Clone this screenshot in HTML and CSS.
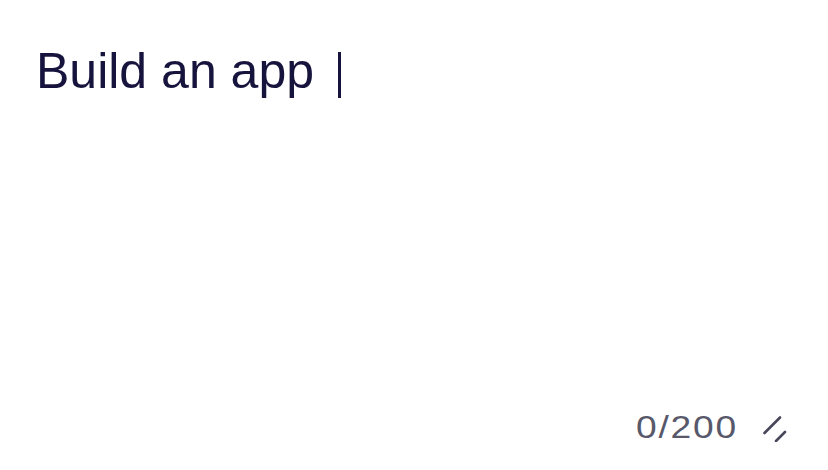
FILE: index.html
```html
<!DOCTYPE html>
<html lang="en">
<head>
<meta charset="utf-8">
<title>Prompt</title>
<link rel="stylesheet" href="styles.css">
</head>
<body>
<div class="editor">
  <div class="prompt"><span class="prompt-text">Build an app</span><span class="caret"></span></div>
  <div class="footer">
    <span class="counter">0/200</span>
    <svg class="resize" width="24" height="28" viewBox="0 0 24 28" aria-hidden="true">
      <line x1="1.5" y1="19" x2="17" y2="3.5" />
      <line x1="13" y1="27" x2="22" y2="18" />
    </svg>
  </div>
</div>
</body>
</html>
```

FILE: styles.css
```css
html, body {
  margin: 0;
  padding: 0;
  background: #ffffff;
}

.editor {
  box-sizing: border-box;
  width: 828px;
  height: 470px;
  padding: 41px 41px 24px 36px;
  display: flex;
  flex-direction: column;
  font-family: "Liberation Sans", Arial, sans-serif;
}

.prompt {
  font-size: 50px;
  line-height: 60px;
  color: #16133d;
  white-space: nowrap;
}

.caret {
  display: inline-block;
  width: 3px;
  height: 46px;
  margin-left: 24px;
  background: #16133d;
  vertical-align: -10px;
}

.footer {
  margin-top: auto;
  height: 36px;
  display: flex;
  justify-content: flex-end;
  align-items: center;
  gap: 25px;
}

.counter {
  font-size: 31px;
  line-height: 36px;
  letter-spacing: 1.5px;
  color: #58586b;
  transform: scaleX(1.2);
  transform-origin: right center;
}

.resize {
  display: block;
  stroke: #48475a;
  stroke-width: 2.6;
  stroke-linecap: round;
}
```
